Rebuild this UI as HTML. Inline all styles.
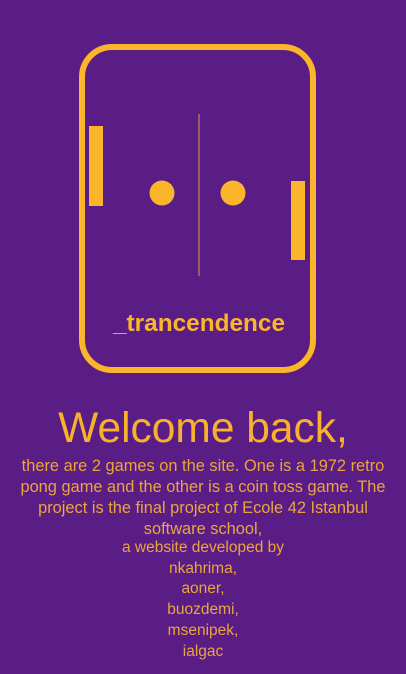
<!DOCTYPE html>
<html><head><style>
body{margin:0;width:406px;height:674px;background:#5a1d86;overflow:hidden;font-family:"Liberation Sans",sans-serif;}
svg{position:absolute;left:0;top:0}
.t{position:absolute;left:0;width:406px;text-align:center;color:#eaa63a;}
h1{position:absolute;left:0;width:406px;text-align:center;margin:0;top:404px;font-weight:normal;font-size:42.5px;color:#f7b12c;line-height:50px;}
.p{top:456px;font-size:16.4px;line-height:21px;left:10px;width:386px}
.n{font-size:15.5px;line-height:20.7px;top:538px}
</style></head><body>
<svg width="406" height="674">
<rect x="82" y="47" width="231" height="323" rx="30" fill="none" stroke="#fbb52a" stroke-width="6"/>
<rect x="89" y="126" width="14" height="80" fill="#fbb52a"/>
<rect x="291" y="181" width="14" height="79" fill="#fbb52a"/>
<circle cx="162" cy="193" r="12.5" fill="#fbb52a"/>
<circle cx="233" cy="193" r="12.5" fill="#fbb52a"/>
<line x1="199" y1="114" x2="199" y2="276" stroke="#e39a4e" stroke-width="1"/>
<text x="199" y="331" text-anchor="middle" font-family="Liberation Sans" font-weight="bold" font-size="24" textLength="172" lengthAdjust="spacingAndGlyphs" fill="#fbb52a">_trancendence</text>
</svg>
<h1>Welcome back,</h1>
<div class="t p">there are 2 games on the site. One is a 1972 retro pong game and the other is a coin toss game. The project is the final project of Ecole 42 Istanbul software school,</div>
<div class="t n">a website developed by<br>nkahrima,<br>aoner,<br>buozdemi,<br>msenipek,<br>ialgac</div>
</body></html>
